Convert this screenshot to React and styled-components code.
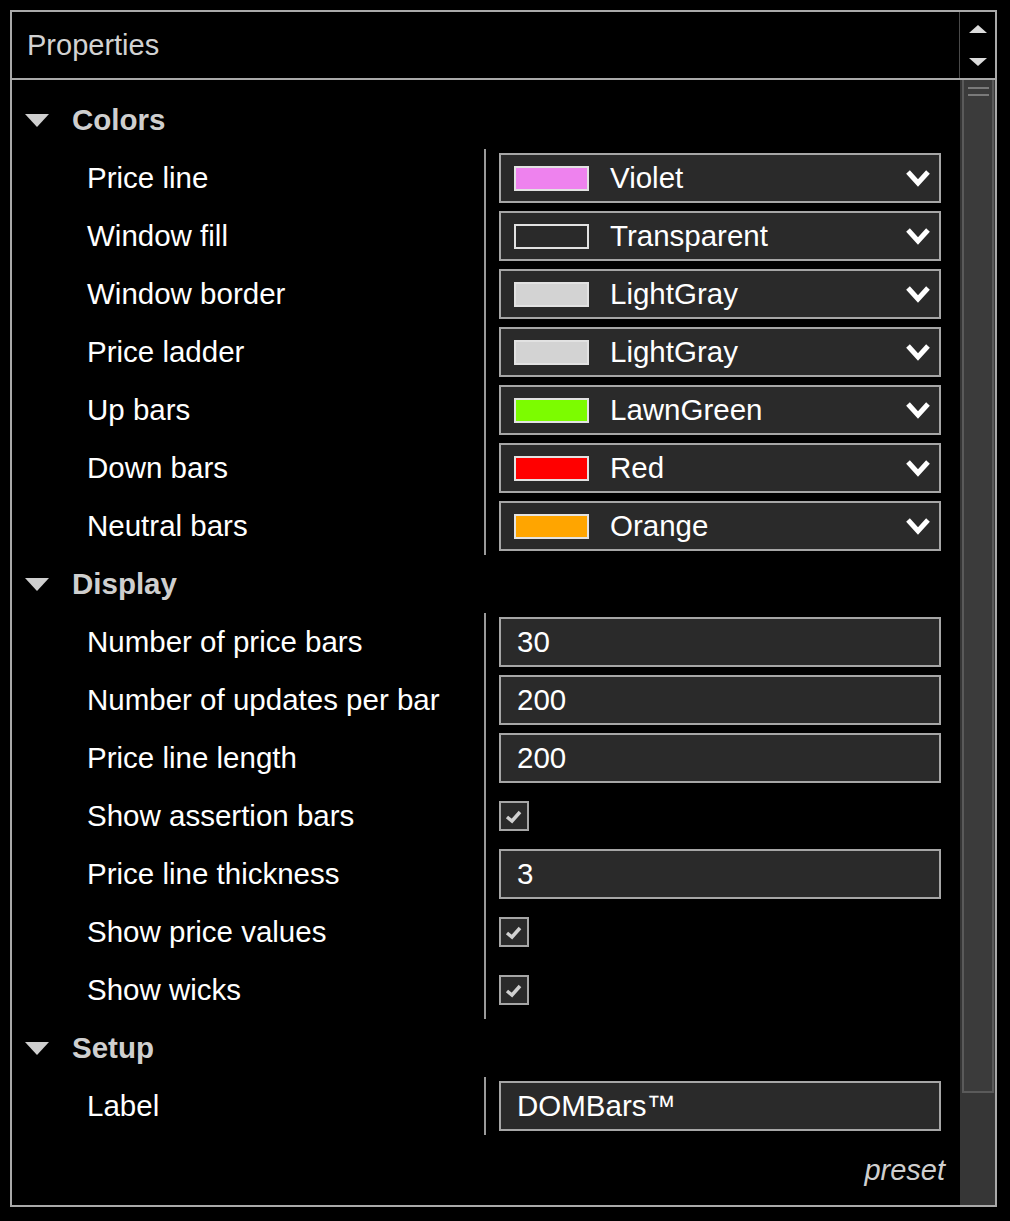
import React from "react";
import styled, {createGlobalStyle} from "styled-components";

const GlobalStyle = createGlobalStyle`
    body {
        margin: 0;
        background: #000;
        font-family: "Liberation Sans", Arial, sans-serif;
    }
`;

const Frame = styled.div`
    box-sizing: border-box;
    width: 987px;
    height: 1197px;
    margin: 10px 0 0 10px;
    border: 2px solid #a9a9a9;
    background: #000;
    display: flex;
    flex-direction: column;
`;

const Header = styled.div`
    display: flex;
    height: 66px;
    border-bottom: 2px solid #a9a9a9;
`;

const Title = styled.div`
    flex: 1;
    display: flex;
    align-items: center;
    padding-left: 15px;
    font-size: 29px;
    color: #d2d2d2;
`;

const Arrows = styled.div`
    width: 35px;
    border-left: 1px solid #4a4a4a;
    display: flex;
    flex-direction: column;
    align-items: center;
    justify-content: space-between;
    padding: 13px 0 12px;
`;

const Arrow = styled.div`
    width: 0;
    height: 0;
    border-left: 9px solid transparent;
    border-right: 9px solid transparent;
    ${props => props.up
        ? "border-bottom: 8px solid #dcdcdc;"
        : "border-top: 8px solid #dcdcdc;"}
`;

const Body = styled.div`
    flex: 1;
    display: flex;
    min-height: 0;
`;

const Content = styled.div`
    flex: 1;
    padding-top: 11px;
`;

const SectionRow = styled.div`
    height: 58px;
    display: flex;
    align-items: center;
    padding-left: 13px;
`;

const Caret = styled.div`
    width: 0;
    height: 0;
    border-left: 12px solid transparent;
    border-right: 12px solid transparent;
    border-top: 13px solid #cfcfcf;
    margin-right: 23px;
`;

const SectionTitle = styled.span`
    font-size: 29.5px;
    font-weight: bold;
    color: #cfcfcf;
`;

const Group = styled.div`
    display: grid;
    grid-template-columns: 397px 1fr;
    grid-auto-rows: 58px;
    margin-left: 75px;
`;

const Label = styled.div`
    display: flex;
    align-items: center;
    font-size: 29.5px;
    color: #fff;
    white-space: nowrap;
`;

const Value = styled.div`
    display: flex;
    align-items: center;
    border-left: 2px solid #9a9a9a;
    padding: 0 19px 0 13px;
`;

const Box = styled.div`
    box-sizing: border-box;
    flex: 1;
    height: 50px;
    display: flex;
    align-items: center;
    border: 2px solid #a6a6a6;
    background: #2a2a2a;
    color: #fff;
    font-size: 29.5px;
    padding: 0 7px 0 ${props => props.select ? 13 : 16}px;
`;

const Swatch = styled.span`
    box-sizing: border-box;
    width: 75px;
    height: 25px;
    border: 2px solid #e2e2e2;
    background: ${props => props.color};
    margin-right: 21px;
    flex-shrink: 0;
`;

const BoxText = styled.span`
    flex: 1;
`;

const Check = styled.div`
    box-sizing: border-box;
    width: 30px;
    height: 30px;
    border: 2px solid #a6a6a6;
    background: #2a2a2a;
    display: flex;
    align-items: center;
    justify-content: center;
`;

const Footer = styled.div`
    text-align: right;
    padding: 19px 15px 0 0;
    font-size: 29px;
    font-style: italic;
    color: #cfcfcf;
`;

const ScrollTrack = styled.div`
    width: 35px;
    background: #363636;
`;

const Thumb = styled.div`
    box-sizing: border-box;
    height: 1013px;
    margin: 0 1px 0 2px;
    border: 2px solid #5a5a5a;
    border-top: none;
    background: #3b3b3b;
    padding: 7px 3px 0 4px;
`;

const Grip = styled.div`
    height: 2px;
    background: #7a7a7a;
    margin-bottom: 5px;
`;

const Chevron = () => (
    <svg width="28" height="18" viewBox="0 0 28 18">
        <polyline points="4,3 14,14 24,3" fill="none" stroke="#fff" strokeWidth="5" />
    </svg>
);

const Tick = () => (
    <svg width="18" height="15" viewBox="0 0 18 15">
        <polyline points="2,8 7,12 15,3" fill="none" stroke="#d0d0d0" strokeWidth="3.5" />
    </svg>
);

const colors = [
    ["Price line", "Violet", "#ee82ee"],
    ["Window fill", "Transparent", "transparent"],
    ["Window border", "LightGray", "#d3d3d3"],
    ["Price ladder", "LightGray", "#d3d3d3"],
    ["Up bars", "LawnGreen", "#7cfc00"],
    ["Down bars", "Red", "#ff0000"],
    ["Neutral bars", "Orange", "#ffa500"]
];

const display = [
    ["Number of price bars", "30"],
    ["Number of updates per bar", "200"],
    ["Price line length", "200"],
    ["Show assertion bars", true],
    ["Price line thickness", "3"],
    ["Show price values", true],
    ["Show wicks", true]
];

const Section = ({title}) => (
    <SectionRow>
        <Caret />
        <SectionTitle>{title}</SectionTitle>
    </SectionRow>
);

const Field = ({value}) => (
    value === true
        ? <Check><Tick /></Check>
        : <Box>{value}</Box>
);

const App = () => (
    <>
        <GlobalStyle />
        <Frame>
            <Header>
                <Title>Properties</Title>
                <Arrows>
                    <Arrow up />
                    <Arrow />
                </Arrows>
            </Header>
            <Body>
                <Content>
                    <Section title="Colors" />
                    <Group>
                        {colors.map(([label, name, color]) => (
                            <React.Fragment key={label}>
                                <Label>{label}</Label>
                                <Value>
                                    <Box select>
                                        <Swatch color={color} />
                                        <BoxText>{name}</BoxText>
                                        <Chevron />
                                    </Box>
                                </Value>
                            </React.Fragment>
                        ))}
                    </Group>
                    <Section title="Display" />
                    <Group>
                        {display.map(([label, value]) => (
                            <React.Fragment key={label}>
                                <Label>{label}</Label>
                                <Value><Field value={value} /></Value>
                            </React.Fragment>
                        ))}
                    </Group>
                    <Section title="Setup" />
                    <Group>
                        <Label>Label</Label>
                        <Value><Box>DOMBars™</Box></Value>
                    </Group>
                    <Footer>preset</Footer>
                </Content>
                <ScrollTrack>
                    <Thumb>
                        <Grip />
                        <Grip />
                    </Thumb>
                </ScrollTrack>
            </Body>
        </Frame>
    </>
);

export default App;
